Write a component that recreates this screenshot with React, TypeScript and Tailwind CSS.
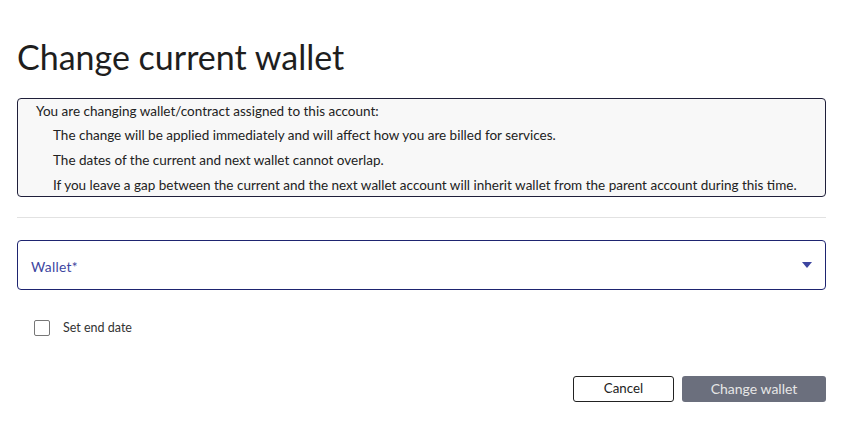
import React from "react";

export default function App() {
  const font = { fontFamily: "Lato, 'Noto Sans', sans-serif" };
  return (
    <div className="w-[844px] h-[421px] bg-white text-[#222] overflow-hidden" style={font}>
      <div className="pl-[17px] pr-[18px] pt-[35px]">
        <h1 className="text-[34px] leading-[43px] font-normal text-[#1e1e1e]">Change current wallet</h1>
        <div className="mt-[20px] h-[99px] border border-[#1f1f3a] rounded-[4px] bg-[#f8f8f8] pl-[18px] text-[13.5px] leading-[25px]">
          <div className="leading-[24px]">You are changing wallet/contract assigned to this account:</div>
          <div className="pl-[17px]">The change will be applied immediately and will affect how you are billed for services.</div>
          <div className="pl-[17px]">The dates of the current and next wallet cannot overlap.</div>
          <div className="pl-[17px] leading-[24px]">If you leave a gap between the current and the next wallet account will inherit wallet from the parent account during this time.</div>
        </div>
        <div className="mt-[20px] h-px bg-[#e2e2e2]" />
        <div className="mt-[22px] h-[50px] border border-[#1e2470] rounded-[4px] flex items-center justify-between pl-[13px] pr-[13px] pt-[5px]">
          <span className="text-[13.8px] text-[#3d45a0] tracking-[0.3px]">Wallet*</span>
          <svg width="10" height="6" viewBox="0 0 10 6" className="mb-[5px]"><path d="M0 0h10L5 6z" fill="#3d45a0" /></svg>
        </div>
        <label className="mt-[29px] ml-[17px] flex items-center gap-[13px]">
          <span className="w-[16px] h-[16px] border border-[#777] rounded-[2px] bg-white" />
          <span className="text-[12.5px] text-[#333]">Set end date</span>
        </label>
        <div className="mt-[38px] flex justify-end gap-[8px]">
          <button className="w-[101px] h-[26px] border border-[#222] rounded-[3px] bg-white text-[13.3px] text-[#222]">Cancel</button>
          <button className="w-[144px] h-[26px] rounded-[3px] bg-[#6b6f7d] text-[14px] text-[#e6e6e6]">Change wallet</button>
        </div>
      </div>
    </div>
  );
}
